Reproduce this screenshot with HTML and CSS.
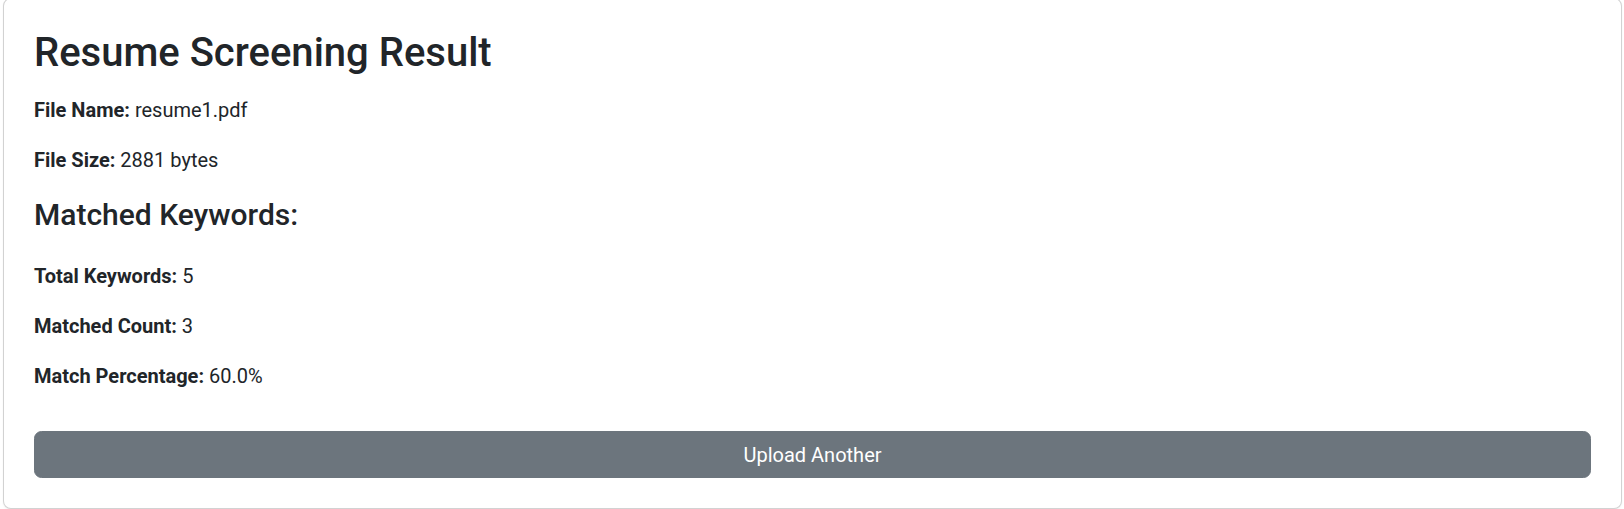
FILE: index.html
```html
<!DOCTYPE html>
<html lang="en">
<head>
<meta charset="utf-8">
<title>Resume Screening Result</title>
<link rel="stylesheet" href="styles.css">
</head>
<body>
<div class="card">
  <div class="card-body">
    <h2 class="title">Resume Screening Result</h2>
    <p><strong>File Name:</strong> resume1.pdf</p>
    <p><strong>File Size:</strong> 2881 bytes</p>
    <h4 class="subtitle">Matched Keywords:</h4>
    <p><strong>Total Keywords:</strong> 5</p>
    <p><strong>Matched Count:</strong> 3</p>
    <p><strong>Match Percentage:</strong> 60.0%</p>
    <div class="actions">
      <a class="btn" href="#">Upload Another</a>
    </div>
  </div>
</div>
</body>
</html>
```
FILE: styles.css
```css
* { box-sizing: border-box; }
html, body { height: 100%; }
body {
  margin: 0;
  overflow: hidden;
  background: #fff;
  color: #212529;
  font-family: Roboto, "Liberation Sans", sans-serif;
  font-size: 20px;
  line-height: 1.5;
}
.card {
  margin: -2px 2px 0 3px;
  border: 1px solid rgba(0, 0, 0, 0.175);
  border-radius: 8px;
  background: #fff;
  box-shadow: 0 1px 2px rgba(0, 0, 0, 0.06);
}
.card-body {
  padding: 30px;
}
.title {
  margin: 0 0 18px;
  font-size: 40px;
  font-weight: 500;
  line-height: 48px;
}
p {
  margin: 0 0 20px;
}
strong { font-weight: 700; }
.subtitle {
  margin: 22px 0 28px;
  font-size: 30px;
  font-weight: 500;
  line-height: 36px;
}
.actions {
  margin-top: 40px;
}
.btn {
  display: block;
  padding: 7.5px 15px;
  line-height: 30px;
  border: 1px solid #6c757d;
  border-radius: 7.5px;
  background: #6c757d;
  color: #fff;
  text-align: center;
  text-decoration: none;
  font-size: 20px;
}
```
